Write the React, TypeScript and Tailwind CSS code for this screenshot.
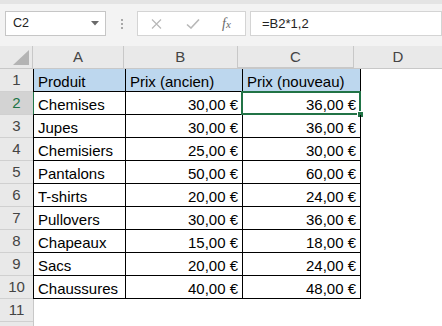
const rows: [string, string, string][] = [
  ['Produit', 'Prix (ancien)', 'Prix (nouveau)'],
  ['Chemises', '30,00 €', '36,00 €'],
  ['Jupes', '30,00 €', '36,00 €'],
  ['Chemisiers', '25,00 €', '30,00 €'],
  ['Pantalons', '50,00 €', '60,00 €'],
  ['T-shirts', '20,00 €', '24,00 €'],
  ['Pullovers', '30,00 €', '36,00 €'],
  ['Chapeaux', '15,00 €', '18,00 €'],
  ['Sacs', '20,00 €', '24,00 €'],
  ['Chaussures', '40,00 €', '48,00 €'],
];

const green = 'border-[#217346]';

function FormulaBar() {
  return (
    <div className="h-[46px] bg-[#f3f3f3] border-t-4 border-[#e4e4e4] pt-[7px] flex items-start">
      <div className="ml-[5px] w-[101px] h-[25px] bg-white border border-[#c6c6c6] flex items-center justify-between pl-[7px] pr-[6px]">
        <span className="text-[12.5px] text-[#222]">C2</span>
        <svg width="8" height="5" viewBox="0 0 8 5">
          <path d="M0 0h8L4 4.5z" fill="#6a6a6a" />
        </svg>
      </div>
      <div className="w-[31px] h-[25px] flex flex-col items-center justify-center gap-[2px]">
        <span className="w-[2px] h-[2px] bg-[#a8a8a8]" />
        <span className="w-[2px] h-[2px] bg-[#a8a8a8]" />
        <span className="w-[2px] h-[2px] bg-[#a8a8a8]" />
      </div>
      <div className="w-[109px] h-[25px] bg-white border border-[#d4d4d4] flex items-center">
        <svg className="ml-[13px]" width="11" height="10" viewBox="0 0 11 10">
          <path d="M1 0.5l9 9M10 0.5l-9 9" stroke="#b8b8b8" strokeWidth="1.2" fill="none" />
        </svg>
        <svg className="ml-[24px]" width="14" height="10" viewBox="0 0 14 10">
          <path d="M1 5.5l4 3.5L13 0.5" stroke="#b8b8b8" strokeWidth="1.6" fill="none" />
        </svg>
        <span className="ml-[22px] text-[14px] italic text-[#6a6a6a] font-['Liberation_Serif',serif] leading-none">
          f<span className="text-[11px]">x</span>
        </span>
      </div>
      <div className="ml-[4px] flex-1 h-[25px] bg-white border border-[#d4d4d4] flex items-center pl-[11px]">
        <span className="text-[13px] text-[#222]">=B2*1,2</span>
      </div>
    </div>
  );
}

function HeaderRow() {
  const head = 'h-[23px] bg-[#e9e9e9] border-b border-[#c8c8c8] flex items-center justify-center text-[15px] text-[#444] pt-[1px]';
  return (
    <div className="flex">
      <div className={`${head} w-[33px] items-end justify-end pb-[3px] pr-[3px]`}>
        <svg width="16" height="15" viewBox="0 0 16 15">
          <path d="M16 0V15H0z" fill="#b4b4b4" />
        </svg>
      </div>
      <div className={`${head} w-[93px] border-l border-r`}>A</div>
      <div className={`${head} w-[117px] border-r`}>B</div>
      <div className={`${head} w-[118px] border-r bg-[#d3d3d3] border-b-2 ${green} border-r-[#c8c8c8]`}>C</div>
      <div className={`${head} w-[90px]`}>D</div>
    </div>
  );
}

function DataRow({ n, cells, label = true }: { n: number; cells?: [string, string, string]; label?: boolean }) {
  const selected = n === 2;
  const cell = 'h-[23px] border-b border-black text-[15px] text-black pt-[3px] leading-[19px] px-[4px] whitespace-nowrap';
  return (
    <div className="flex">
      <div
        className={`w-[33px] h-[23px] border-b border-[#d0d0d0] flex items-center justify-center text-[15px] pt-[1px] ${
          selected ? 'bg-[#d3d3d3] text-[#217346]' : 'bg-[#e9e9e9] text-[#444]'
        }`}
      >
        {label ? n : null}
      </div>
      {cells ? (
        <>
          <div className={`${cell} w-[93px] border-l border-r ${selected ? 'border-l-[#217346]' : ''} ${n === 1 ? 'bg-[#bdd7ee]' : ''}`}>
            {cells[0]}
          </div>
          <div className={`${cell} w-[117px] border-r ${n === 1 ? 'bg-[#bdd7ee]' : 'text-right'}`}>{cells[1]}</div>
          <div className={`${cell} w-[118px] border-r relative ${n === 1 ? 'bg-[#bdd7ee]' : 'text-right'}`}>
            {cells[2]}
            {selected && (
              <div className={`absolute left-[-2px] top-[-1px] right-[-1px] bottom-[-1px] border-2 ${green}`}>
                <div className="absolute right-[-5px] bottom-[-5px] w-[7px] h-[7px] bg-[#217346] border border-white" />
              </div>
            )}
          </div>
        </>
      ) : (
        <div className="h-[23px] w-[93px] border-l border-[#c8c8c8]" />
      )}
    </div>
  );
}

export default function App() {
  return (
    <div className="w-[442px] h-[326px] overflow-hidden bg-white font-['Liberation_Sans',Arial,sans-serif]">
      <FormulaBar />
      <HeaderRow />
      {rows.map((r, i) => (
        <DataRow key={i} n={i + 1} cells={r} />
      ))}
      <DataRow n={11} />
      {/* row 12 only peeks in at the bottom edge, its number falls outside the window */}
      <DataRow n={12} label={false} />
    </div>
  );
}
